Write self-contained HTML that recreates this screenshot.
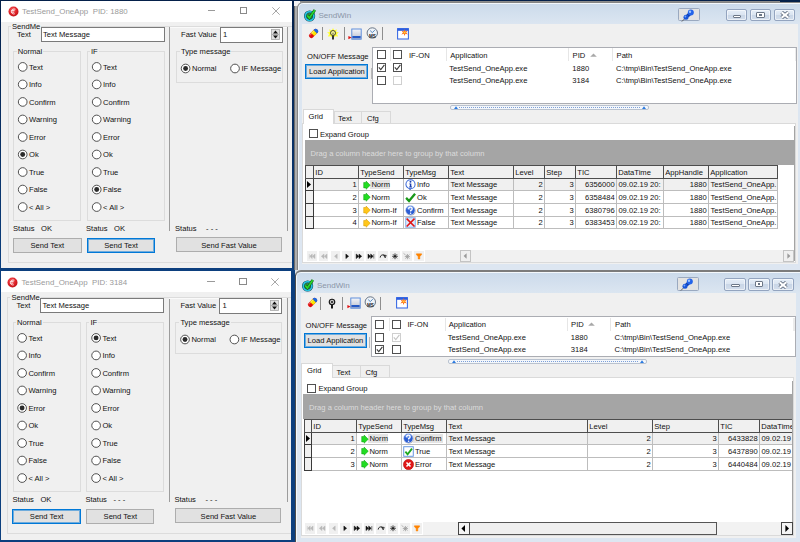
<!DOCTYPE html><html><head><meta charset='utf-8'><title>SendWin test</title><style>
*{box-sizing:border-box;margin:0;padding:0}
html,body{width:800px;height:542px;overflow:hidden;background:linear-gradient(#04204a,#0c3f7e 270px,#0c3f7e);}
body{position:relative;font-family:"Liberation Sans",sans-serif;font-size:7.6px;color:#111;line-height:1}
.a{position:absolute}
.t{position:absolute;white-space:pre;line-height:10px;height:10px}
.win{position:absolute;background:#f0f0f0;overflow:hidden}
.tb{position:absolute;left:0;top:0;right:0;height:21px;background:#fff}
.ttl{position:absolute;white-space:pre;color:#9a9a9a;font-size:7.9px;line-height:10px}
.gb{position:absolute;border:1px solid #dcdcdc}
.gl{position:absolute;background:#f0f0f0;white-space:pre;line-height:10px;height:10px;padding:0 1px}
.inp{position:absolute;background:#fff;border:1px solid #7a7a7a}
.rd{position:absolute;width:9.4px;height:9.4px;border-radius:50%;border:1px solid #333;background:#fff}
.rd.on::after{content:"";position:absolute;left:1.4px;top:1.4px;width:4.6px;height:4.6px;border-radius:50%;background:#222}
.btn{position:absolute;background:#e1e1e1;border:1px solid #adadad;text-align:center;white-space:pre}
.btn.f{border:1px solid #0078d7;box-shadow:inset 0 0 0 1px rgba(0,120,215,.5)}
.cb{position:absolute;width:9px;height:9px;border:1px solid #505050;background:#fff}
.cb.dis{border-color:#cfcfcf}
.sw{position:absolute;background:linear-gradient(#cbdaeb,#dce6f1 22px,#dde6f1);border:1px solid #5a6370;border-radius:6px 6px 0 0;overflow:hidden;box-shadow:inset 0 0 0 1px #f4f8fc}
.cl{position:absolute;background:#f0f0f0;overflow:hidden}
.hd{position:absolute;background:#f0f0f0;border:1px solid #6a6a6a;border-left-width:1px;white-space:pre;overflow:hidden}
.c{position:absolute;background:#fff;border-right:1px solid #c0c0c0;border-bottom:1px solid #c0c0c0;white-space:pre;overflow:hidden}
.c.s{background:#efefef}
.r{text-align:right}
.cap{position:absolute;border:1px solid #93a4bf;border-radius:2px;background:linear-gradient(#e6eef8,#dbe5f1 45%,#c9d6e7 50%,#d3deec);box-shadow:inset 0 0 0 1px rgba(255,255,255,.55)}
.nb{position:absolute;width:9.8px;height:10.6px;background:#f0f0f0}
</style></head><body>
<div class='win' style='left:1px;top:1px;width:291px;height:267px'>
<div class='tb'></div>
<svg class='a' style='left:6.5px;top:4.5px' width='11' height='11' viewBox='0 0 11 11'><defs><radialGradient id='rg1880' cx='.42' cy='.36' r='.7'><stop offset='0' stop-color='#f46a6a'/><stop offset='.55' stop-color='#e02228'/><stop offset='1' stop-color='#b80f14'/></radialGradient></defs><circle cx='5.5' cy='5.5' r='5' fill='url(#rg1880)'/><path d='M7.4 3.2C5.4 2.6 3.6 3.4 3.4 5.4C3.2 7.2 4.8 8.4 6.8 7.8M3.6 4.6H6.6M3.4 6.2H6.2' fill='none' stroke='#fff' stroke-width='.9' opacity='.92'/></svg>
<div class='ttl' style='left:21px;top:5.5px'>TestSend_OneApp  PID: 1880</div>
<div class='a' style='left:207px;top:9.2px;width:7.4px;height:0.8px;background:#9a9a9a'></div>
<div class='a' style='left:239px;top:6px;width:7.4px;height:7.4px;border:0.8px solid #8a8a8a'></div>
<svg class='a' style='left:270.6px;top:5.6px' width='8' height='8' viewBox='0 0 8 8'><path d='M0.3 0.3L7.7 7.7M7.7 0.3L0.3 7.7' stroke='#8f8f8f' stroke-width='.8'/></svg>
<div class='gb' style='left:6.6px;top:25px;width:286px;height:236.8px'></div>
<div class='gl' style='left:10.00px;top:21.00px;'>SendMe</div>
<div class='t' style='left:16.00px;top:29.00px;'>Text</div>
<div class='inp' style='left:40px;top:26px;width:124px;height:15px'></div>
<div class='t' style='left:42.00px;top:29.00px;'>Text Message</div>
<div class='gb' style='left:12.2px;top:49.5px;width:68.3px;height:170.6px'></div>
<div class='gl' style='left:15.70px;top:46.00px;'>Normal</div>
<div class='gb' style='left:85.5px;top:49.5px;width:78px;height:170.6px'></div>
<div class='gl' style='left:89.00px;top:46.00px;'>IF</div>
<svg class='a' style='left:15px;top:59px' width='12' height='12' viewBox='0 0 12 12'><circle cx='6.70' cy='6.90' r='4.35' fill='#fff' stroke='#3e3e3e' stroke-width='.9'/></svg>
<div class='t' style='left:28.00px;top:62.00px;'>Text</div>
<svg class='a' style='left:89px;top:59px' width='12' height='12' viewBox='0 0 12 12'><circle cx='6.70' cy='6.90' r='4.35' fill='#fff' stroke='#3e3e3e' stroke-width='.9'/></svg>
<div class='t' style='left:102.00px;top:62.00px;'>Text</div>
<svg class='a' style='left:15px;top:77px' width='12' height='12' viewBox='0 0 12 12'><circle cx='6.70' cy='6.42' r='4.35' fill='#fff' stroke='#3e3e3e' stroke-width='.9'/></svg>
<div class='t' style='left:28.00px;top:79.00px;'>Info</div>
<svg class='a' style='left:89px;top:77px' width='12' height='12' viewBox='0 0 12 12'><circle cx='6.70' cy='6.42' r='4.35' fill='#fff' stroke='#3e3e3e' stroke-width='.9'/></svg>
<div class='t' style='left:102.00px;top:79.00px;'>Info</div>
<svg class='a' style='left:15px;top:94px' width='12' height='12' viewBox='0 0 12 12'><circle cx='6.70' cy='6.94' r='4.35' fill='#fff' stroke='#3e3e3e' stroke-width='.9'/></svg>
<div class='t' style='left:28.00px;top:97.00px;'>Confirm</div>
<svg class='a' style='left:89px;top:94px' width='12' height='12' viewBox='0 0 12 12'><circle cx='6.70' cy='6.94' r='4.35' fill='#fff' stroke='#3e3e3e' stroke-width='.9'/></svg>
<div class='t' style='left:102.00px;top:97.00px;'>Confirm</div>
<svg class='a' style='left:15px;top:112px' width='12' height='12' viewBox='0 0 12 12'><circle cx='6.70' cy='6.46' r='4.35' fill='#fff' stroke='#3e3e3e' stroke-width='.9'/></svg>
<div class='t' style='left:28.00px;top:114.00px;'>Warning</div>
<svg class='a' style='left:89px;top:112px' width='12' height='12' viewBox='0 0 12 12'><circle cx='6.70' cy='6.46' r='4.35' fill='#fff' stroke='#3e3e3e' stroke-width='.9'/></svg>
<div class='t' style='left:102.00px;top:114.00px;'>Warning</div>
<svg class='a' style='left:15px;top:129px' width='12' height='12' viewBox='0 0 12 12'><circle cx='6.70' cy='6.98' r='4.35' fill='#fff' stroke='#3e3e3e' stroke-width='.9'/></svg>
<div class='t' style='left:28.00px;top:132.00px;'>Error</div>
<svg class='a' style='left:89px;top:129px' width='12' height='12' viewBox='0 0 12 12'><circle cx='6.70' cy='6.98' r='4.35' fill='#fff' stroke='#3e3e3e' stroke-width='.9'/></svg>
<div class='t' style='left:102.00px;top:132.00px;'>Error</div>
<svg class='a' style='left:15px;top:147px' width='12' height='12' viewBox='0 0 12 12'><circle cx='6.70' cy='6.50' r='4.35' fill='#fff' stroke='#3e3e3e' stroke-width='.9'/><circle cx='6.70' cy='6.50' r='2.45' fill='#2b2b2b'/></svg>
<div class='t' style='left:28.00px;top:149.00px;'>Ok</div>
<svg class='a' style='left:89px;top:147px' width='12' height='12' viewBox='0 0 12 12'><circle cx='6.70' cy='6.50' r='4.35' fill='#fff' stroke='#3e3e3e' stroke-width='.9'/></svg>
<div class='t' style='left:102.00px;top:149.00px;'>Ok</div>
<svg class='a' style='left:15px;top:165px' width='12' height='12' viewBox='0 0 12 12'><circle cx='6.70' cy='6.02' r='4.35' fill='#fff' stroke='#3e3e3e' stroke-width='.9'/></svg>
<div class='t' style='left:28.00px;top:167.00px;'>True</div>
<svg class='a' style='left:89px;top:165px' width='12' height='12' viewBox='0 0 12 12'><circle cx='6.70' cy='6.02' r='4.35' fill='#fff' stroke='#3e3e3e' stroke-width='.9'/></svg>
<div class='t' style='left:102.00px;top:167.00px;'>True</div>
<svg class='a' style='left:15px;top:182px' width='12' height='12' viewBox='0 0 12 12'><circle cx='6.70' cy='6.54' r='4.35' fill='#fff' stroke='#3e3e3e' stroke-width='.9'/></svg>
<div class='t' style='left:28.00px;top:184.00px;'>False</div>
<svg class='a' style='left:89px;top:182px' width='12' height='12' viewBox='0 0 12 12'><circle cx='6.70' cy='6.54' r='4.35' fill='#fff' stroke='#3e3e3e' stroke-width='.9'/><circle cx='6.70' cy='6.54' r='2.45' fill='#2b2b2b'/></svg>
<div class='t' style='left:102.00px;top:184.00px;'>False</div>
<svg class='a' style='left:15px;top:200px' width='12' height='12' viewBox='0 0 12 12'><circle cx='6.70' cy='6.06' r='4.35' fill='#fff' stroke='#3e3e3e' stroke-width='.9'/></svg>
<div class='t' style='left:28.00px;top:202.00px;'>&lt; All &gt;</div>
<svg class='a' style='left:89px;top:200px' width='12' height='12' viewBox='0 0 12 12'><circle cx='6.70' cy='6.06' r='4.35' fill='#fff' stroke='#3e3e3e' stroke-width='.9'/></svg>
<div class='t' style='left:102.00px;top:202.00px;'>&lt; All &gt;</div>
<div class='t' style='left:12.00px;top:223.00px;'>Status</div>
<div class='t' style='left:40.00px;top:223.00px;'>OK</div>
<div class='t' style='left:85.00px;top:223.00px;'>Status</div>
<div class='t' style='left:113.00px;top:223.00px;'>OK</div>
<div class='t' style='left:174.00px;top:223.00px;'>Status</div>
<div class='t' style='left:205.00px;top:223.00px;'>- - -</div>
<div class='btn' style='left:12px;top:237px;width:68.5px;height:15px'></div>
<div class='t' style='left:12.00px;top:240.00px;width:68.5px;text-align:center'>Send Text</div>
<div class='btn f' style='left:86px;top:237px;width:68px;height:15px'></div>
<div class='t' style='left:86.00px;top:240.00px;width:68px;text-align:center'>Send Text</div>
<div class='btn' style='left:175px;top:236.4px;width:106px;height:15px'></div>
<div class='t' style='left:175.00px;top:240.00px;width:106px;text-align:center'>Send Fast Value</div>
<div class='a' style='left:168.3px;top:26px;width:0.9px;height:204px;background:#9c9c9c'></div>
<div class='a' style='left:286.3px;top:26px;width:0.9px;height:204px;background:#9c9c9c'></div>
<div class='a' style='left:169px;top:25.6px;width:117px;height:0.8px;background:#fafafa'></div>
<div class='t' style='left:180.00px;top:29.00px;'>Fast Value</div>
<div class='inp' style='left:219px;top:26px;width:63px;height:16px'></div>
<div class='t' style='left:222.00px;top:29.00px;'>1</div>
<svg class='a' style='left:270px;top:28px' width='9' height='11' viewBox='0 0 9 11'><rect x='.5' y='.5' width='8' height='4.8' fill='#e1e1e1' stroke='#a8a8a8' stroke-width='.8'/><rect x='.5' y='5.7' width='8' height='4.8' fill='#e1e1e1' stroke='#a8a8a8' stroke-width='.8'/><path d='M2 4.4L4.5 1.6L7 4.4Z M2 6.6L4.5 9.4L7 6.6Z' fill='#111'/></svg>
<div class='gb' style='left:174.5px;top:50px;width:107px;height:31.5px'></div>
<div class='gl' style='left:179.00px;top:46.00px;'>Type message</div>
<svg class='a' style='left:178px;top:61px' width='12' height='12' viewBox='0 0 12 12'><circle cx='6.60' cy='6.50' r='4.35' fill='#fff' stroke='#3e3e3e' stroke-width='.9'/><circle cx='6.60' cy='6.50' r='2.45' fill='#2b2b2b'/></svg>
<div class='t' style='left:191.00px;top:63.00px;'>Normal</div>
<svg class='a' style='left:228px;top:61px' width='12' height='12' viewBox='0 0 12 12'><circle cx='6.00' cy='6.50' r='4.35' fill='#fff' stroke='#3e3e3e' stroke-width='.9'/></svg>
<div class='t' style='left:240.50px;top:63.00px;'>IF Message</div>
</div>
<div class='win' style='left:1px;top:271px;width:290px;height:269px'>
<div class='tb'></div>
<svg class='a' style='left:5.9px;top:5.5px' width='11' height='11' viewBox='0 0 11 11'><defs><radialGradient id='rg3184' cx='.42' cy='.36' r='.7'><stop offset='0' stop-color='#f46a6a'/><stop offset='.55' stop-color='#e02228'/><stop offset='1' stop-color='#b80f14'/></radialGradient></defs><circle cx='5.5' cy='5.5' r='5' fill='url(#rg3184)'/><path d='M7.4 3.2C5.4 2.6 3.6 3.4 3.4 5.4C3.2 7.2 4.8 8.4 6.8 7.8M3.6 4.6H6.6M3.4 6.2H6.2' fill='none' stroke='#fff' stroke-width='.9' opacity='.92'/></svg>
<div class='ttl' style='left:20.4px;top:6.5px'>TestSend_OneApp  PID: 3184</div>
<div class='a' style='left:206.4px;top:10.2px;width:7.4px;height:0.8px;background:#9a9a9a'></div>
<div class='a' style='left:238.4px;top:7px;width:7.4px;height:7.4px;border:0.8px solid #8a8a8a'></div>
<svg class='a' style='left:270.0px;top:6.6px' width='8' height='8' viewBox='0 0 8 8'><path d='M0.3 0.3L7.7 7.7M7.7 0.3L0.3 7.7' stroke='#8f8f8f' stroke-width='.8'/></svg>
<div class='gb' style='left:6.0px;top:26px;width:286px;height:236.8px'></div>
<div class='gl' style='left:9.40px;top:22.00px;'>SendMe</div>
<div class='t' style='left:15.40px;top:30.00px;'>Text</div>
<div class='inp' style='left:39.4px;top:27px;width:124px;height:15px'></div>
<div class='t' style='left:41.40px;top:30.00px;'>Text Message</div>
<div class='gb' style='left:11.6px;top:50.5px;width:68.3px;height:170.6px'></div>
<div class='gl' style='left:15.10px;top:47.00px;'>Normal</div>
<div class='gb' style='left:84.9px;top:50.5px;width:78px;height:170.6px'></div>
<div class='gl' style='left:88.40px;top:47.00px;'>IF</div>
<svg class='a' style='left:15px;top:60px' width='12' height='12' viewBox='0 0 12 12'><circle cx='6.10' cy='6.90' r='4.35' fill='#fff' stroke='#3e3e3e' stroke-width='.9'/></svg>
<div class='t' style='left:27.40px;top:63.00px;'>Text</div>
<svg class='a' style='left:89px;top:60px' width='12' height='12' viewBox='0 0 12 12'><circle cx='6.10' cy='6.90' r='4.35' fill='#fff' stroke='#3e3e3e' stroke-width='.9'/><circle cx='6.10' cy='6.90' r='2.45' fill='#2b2b2b'/></svg>
<div class='t' style='left:101.40px;top:63.00px;'>Text</div>
<svg class='a' style='left:15px;top:78px' width='12' height='12' viewBox='0 0 12 12'><circle cx='6.10' cy='6.42' r='4.35' fill='#fff' stroke='#3e3e3e' stroke-width='.9'/></svg>
<div class='t' style='left:27.40px;top:80.00px;'>Info</div>
<svg class='a' style='left:89px;top:78px' width='12' height='12' viewBox='0 0 12 12'><circle cx='6.10' cy='6.42' r='4.35' fill='#fff' stroke='#3e3e3e' stroke-width='.9'/></svg>
<div class='t' style='left:101.40px;top:80.00px;'>Info</div>
<svg class='a' style='left:15px;top:95px' width='12' height='12' viewBox='0 0 12 12'><circle cx='6.10' cy='6.94' r='4.35' fill='#fff' stroke='#3e3e3e' stroke-width='.9'/></svg>
<div class='t' style='left:27.40px;top:98.00px;'>Confirm</div>
<svg class='a' style='left:89px;top:95px' width='12' height='12' viewBox='0 0 12 12'><circle cx='6.10' cy='6.94' r='4.35' fill='#fff' stroke='#3e3e3e' stroke-width='.9'/></svg>
<div class='t' style='left:101.40px;top:98.00px;'>Confirm</div>
<svg class='a' style='left:15px;top:113px' width='12' height='12' viewBox='0 0 12 12'><circle cx='6.10' cy='6.46' r='4.35' fill='#fff' stroke='#3e3e3e' stroke-width='.9'/></svg>
<div class='t' style='left:27.40px;top:115.00px;'>Warning</div>
<svg class='a' style='left:89px;top:113px' width='12' height='12' viewBox='0 0 12 12'><circle cx='6.10' cy='6.46' r='4.35' fill='#fff' stroke='#3e3e3e' stroke-width='.9'/></svg>
<div class='t' style='left:101.40px;top:115.00px;'>Warning</div>
<svg class='a' style='left:15px;top:130px' width='12' height='12' viewBox='0 0 12 12'><circle cx='6.10' cy='6.98' r='4.35' fill='#fff' stroke='#3e3e3e' stroke-width='.9'/><circle cx='6.10' cy='6.98' r='2.45' fill='#2b2b2b'/></svg>
<div class='t' style='left:27.40px;top:133.00px;'>Error</div>
<svg class='a' style='left:89px;top:130px' width='12' height='12' viewBox='0 0 12 12'><circle cx='6.10' cy='6.98' r='4.35' fill='#fff' stroke='#3e3e3e' stroke-width='.9'/></svg>
<div class='t' style='left:101.40px;top:133.00px;'>Error</div>
<svg class='a' style='left:15px;top:148px' width='12' height='12' viewBox='0 0 12 12'><circle cx='6.10' cy='6.50' r='4.35' fill='#fff' stroke='#3e3e3e' stroke-width='.9'/></svg>
<div class='t' style='left:27.40px;top:150.00px;'>Ok</div>
<svg class='a' style='left:89px;top:148px' width='12' height='12' viewBox='0 0 12 12'><circle cx='6.10' cy='6.50' r='4.35' fill='#fff' stroke='#3e3e3e' stroke-width='.9'/></svg>
<div class='t' style='left:101.40px;top:150.00px;'>Ok</div>
<svg class='a' style='left:15px;top:166px' width='12' height='12' viewBox='0 0 12 12'><circle cx='6.10' cy='6.02' r='4.35' fill='#fff' stroke='#3e3e3e' stroke-width='.9'/></svg>
<div class='t' style='left:27.40px;top:168.00px;'>True</div>
<svg class='a' style='left:89px;top:166px' width='12' height='12' viewBox='0 0 12 12'><circle cx='6.10' cy='6.02' r='4.35' fill='#fff' stroke='#3e3e3e' stroke-width='.9'/></svg>
<div class='t' style='left:101.40px;top:168.00px;'>True</div>
<svg class='a' style='left:15px;top:183px' width='12' height='12' viewBox='0 0 12 12'><circle cx='6.10' cy='6.54' r='4.35' fill='#fff' stroke='#3e3e3e' stroke-width='.9'/></svg>
<div class='t' style='left:27.40px;top:185.00px;'>False</div>
<svg class='a' style='left:89px;top:183px' width='12' height='12' viewBox='0 0 12 12'><circle cx='6.10' cy='6.54' r='4.35' fill='#fff' stroke='#3e3e3e' stroke-width='.9'/></svg>
<div class='t' style='left:101.40px;top:185.00px;'>False</div>
<svg class='a' style='left:15px;top:201px' width='12' height='12' viewBox='0 0 12 12'><circle cx='6.10' cy='6.06' r='4.35' fill='#fff' stroke='#3e3e3e' stroke-width='.9'/></svg>
<div class='t' style='left:27.40px;top:203.00px;'>&lt; All &gt;</div>
<svg class='a' style='left:89px;top:201px' width='12' height='12' viewBox='0 0 12 12'><circle cx='6.10' cy='6.06' r='4.35' fill='#fff' stroke='#3e3e3e' stroke-width='.9'/></svg>
<div class='t' style='left:101.40px;top:203.00px;'>&lt; All &gt;</div>
<div class='t' style='left:11.40px;top:224.00px;'>Status</div>
<div class='t' style='left:39.40px;top:224.00px;'>OK</div>
<div class='t' style='left:84.40px;top:224.00px;'>Status</div>
<div class='t' style='left:112.40px;top:224.00px;'>- - -</div>
<div class='t' style='left:173.40px;top:224.00px;'>Status</div>
<div class='t' style='left:204.40px;top:224.00px;'>- - -</div>
<div class='btn f' style='left:11.4px;top:238px;width:68.5px;height:15px'></div>
<div class='t' style='left:11.40px;top:241.00px;width:68.5px;text-align:center'>Send Text</div>
<div class='btn' style='left:85.4px;top:238px;width:68px;height:15px'></div>
<div class='t' style='left:85.40px;top:241.00px;width:68px;text-align:center'>Send Text</div>
<div class='btn' style='left:174.4px;top:237.4px;width:106px;height:15px'></div>
<div class='t' style='left:174.40px;top:241.00px;width:106px;text-align:center'>Send Fast Value</div>
<div class='a' style='left:167.7px;top:27px;width:0.9px;height:204px;background:#9c9c9c'></div>
<div class='a' style='left:285.7px;top:27px;width:0.9px;height:204px;background:#9c9c9c'></div>
<div class='a' style='left:168.4px;top:26.6px;width:117px;height:0.8px;background:#fafafa'></div>
<div class='t' style='left:179.40px;top:30.00px;'>Fast Value</div>
<div class='inp' style='left:218.4px;top:27px;width:63px;height:16px'></div>
<div class='t' style='left:221.40px;top:30.00px;'>1</div>
<svg class='a' style='left:269.4px;top:29px' width='9' height='11' viewBox='0 0 9 11'><rect x='.5' y='.5' width='8' height='4.8' fill='#e1e1e1' stroke='#a8a8a8' stroke-width='.8'/><rect x='.5' y='5.7' width='8' height='4.8' fill='#e1e1e1' stroke='#a8a8a8' stroke-width='.8'/><path d='M2 4.4L4.5 1.6L7 4.4Z M2 6.6L4.5 9.4L7 6.6Z' fill='#111'/></svg>
<div class='gb' style='left:173.9px;top:51px;width:107px;height:31.5px'></div>
<div class='gl' style='left:178.40px;top:47.00px;'>Type message</div>
<svg class='a' style='left:178px;top:62px' width='12' height='12' viewBox='0 0 12 12'><circle cx='6.00' cy='6.50' r='4.35' fill='#fff' stroke='#3e3e3e' stroke-width='.9'/><circle cx='6.00' cy='6.50' r='2.45' fill='#2b2b2b'/></svg>
<div class='t' style='left:190.40px;top:64.00px;'>Normal</div>
<svg class='a' style='left:227px;top:62px' width='12' height='12' viewBox='0 0 12 12'><circle cx='6.40' cy='6.50' r='4.35' fill='#fff' stroke='#3e3e3e' stroke-width='.9'/></svg>
<div class='t' style='left:239.90px;top:64.00px;'>IF Message</div>
</div>
<div class='a' style='left:294.4px;top:1.2px;width:520px;height:269px;background:#adadad;border-left:1px solid #6c6c6c;border-top:1px solid #8c8c8c'></div>
<div class='a' style='left:294.4px;top:1.2px;width:6px;height:5px;background:#f4f4f4'></div>
<div class='a' style='left:780px;top:0;width:20px;height:2px;background:#04204a'></div>
<div class='sw' style='left:296.8px;top:2.2px;width:520px;height:268.4px;border:1px solid #858585;border-bottom:0'>
<svg class='a' style='left:5.8px;top:4.7px' width='13' height='14' viewBox='0 0 13 14'><circle cx='5.6' cy='8' r='4.3' fill='#2c8a4a' stroke='#173a48' stroke-width='2.6'/><circle cx='5.6' cy='8' r='4.3' fill='none' stroke='#25c3e0' stroke-width='1.7'/><path d='M3.2 7.4 L5.4 10 L10.8 2' fill='none' stroke='#0e5a16' stroke-width='2.8'/><path d='M3.2 7.4 L5.4 10 L10.8 2' fill='none' stroke='#2bd42b' stroke-width='1.7'/></svg>
<div class='ttl' style='left:20.7px;top:7.8px;color:#8b96a8;font-size:8.05px'>SendWin</div>
<div class='a' style='left:380.6px;top:4.7px;width:21.8px;height:13.5px;background:#e3e3e3;border:1px solid #9aa9c0;border-radius:1.5px'></div>
<svg class='a' style='left:383.6px;top:5.4px' width='14' height='13' viewBox='0 0 14 13'><path d='M0.8 12.6L4.4 9' stroke='#4a4a4a' stroke-width='.8'/><path d='M5.4 5.6L7.4 3.8L9.8 6.4L7.4 8.2Z' fill='#0f3fb0'/><circle cx='5' cy='8.2' r='2.5' fill='#1854d8'/><circle cx='9.8' cy='3.6' r='3' fill='#2464ea'/><circle cx='9' cy='2.7' r='1.2' fill='#9cc4ff'/><circle cx='4.4' cy='7.5' r='.9' fill='#7aa8f8'/></svg>
<div class='cap' style='left:427.8px;top:6.0px;width:21.8px;height:12.2px'></div>
<div class='cap' style='left:451.8px;top:6.0px;width:21.8px;height:12.2px'></div>
<div class='cap' style='left:475.8px;top:6.0px;width:21.8px;height:12.2px'></div>
<div class='a' style='left:435.2px;top:11.6px;width:8.4px;height:3.4px;background:#fff;border:1px solid #6c7787;border-radius:1px'></div>
<div class='a' style='left:458.6px;top:8.8px;width:8.4px;height:6px;background:#fff;border:1px solid #6c7787;border-radius:1px'></div>
<div class='a' style='left:461.4px;top:10.8px;width:2.8px;height:1.6px;background:#6a7686'></div>
<svg class='a' style='left:481.8px;top:8.2px' width='10' height='8' viewBox='0 0 10 8'><path d='M1.6 1.2L8.4 6.8M8.4 1.2L1.6 6.8' stroke='#687486' stroke-width='3.7'/><path d='M1.6 1.2L8.4 6.8M8.4 1.2L1.6 6.8' stroke='#fff' stroke-width='2.1'/></svg>
<div class='cl' style='left:4.6px;top:20.5px;width:495.2px;height:240.5px'>
<svg class='a' style='left:5.900000000000034px;top:4.5px' width='11' height='11' viewBox='0 0 13 13'><g transform='rotate(-45 6.5 6.5)'><rect x='0.2' y='3.7' width='12.6' height='5.6' rx='2.4' fill='#e00c0c'/><rect x='5' y='3.7' width='4.6' height='5.6' fill='#f8e800'/><path d='M9.4 3.7H10.6A2.3 2.6 0 0 1 10.6 9.3H9.4Z' fill='#1a6ae0'/><rect x='1.6' y='4.3' width='8' height='1.2' fill='#fff' opacity='.35'/></g></svg>
<div class='a' style='left:19.600000000000023px;top:3.8000000000000007px;width:.8px;height:13px;background:#8e8e8e'></div>
<svg class='a' style='left:25.0px;top:3.900000000000002px' width='12' height='13' viewBox='0 0 12 13'><path d='M6 0L7.2 2.6L9.8 1.2L9.2 3.9L12 4.6L9.8 6L11.2 8.4L8.4 8.2L6 10L3.6 8.2L0.8 8.4L2.2 6L0 4.6L2.8 3.9L2.2 1.2L4.8 2.6Z' fill='#ffff30'/><circle cx='6' cy='5' r='2.5' fill='#ffff9a' stroke='#222' stroke-width='.8'/><path d='M5 7.4H7V11.4H5Z' fill='#333'/><path d='M5.4 4.6L6 6.6L6.6 4.6' stroke='#444' stroke-width='.5' fill='none'/></svg>
<div class='a' style='left:41.60000000000002px;top:3.8000000000000007px;width:.8px;height:13px;background:#8e8e8e'></div>
<svg class='a' style='left:46.0px;top:4.300000000000001px' width='14' height='12' viewBox='0 0 14 12'><defs><linearGradient id='dg1' x1='0' y1='0' x2='0' y2='1'><stop offset='0' stop-color='#f4f6fa'/><stop offset='1' stop-color='#b9c0cf'/></linearGradient></defs><rect x='3.8' y='1' width='9.4' height='10.2' fill='url(#dg1)' stroke='#5285d8' stroke-width='.9'/><rect x='4.4' y='8' width='8.2' height='2.2' fill='#2458c4'/><path d='M0.4 8L3.6 9.6L0.4 11.2Z' fill='#e01010'/></svg>
<svg class='a' style='left:63.60000000000002px;top:3.3000000000000007px' width='13' height='13' viewBox='0 0 13 13'><circle cx='6.3' cy='6' r='5.2' fill='#eef3f8' stroke='#6a7686' stroke-width='1'/><path d='M4.2 3.6L6.3 5.6L8.8 3.2' stroke='#2a6ab0' stroke-width='.8' fill='none'/><text x='6.4' y='11.2' font-size='4.6' font-weight='bold' text-anchor='middle' font-family='Liberation Sans, sans-serif' fill='#222'>MS</text></svg>
<div class='a' style='left:79.60000000000002px;top:3.8000000000000007px;width:.8px;height:13px;background:#8e8e8e'></div>
<svg class='a' style='left:95.10000000000002px;top:4.300000000000001px' width='12' height='12' viewBox='0 0 12 12'><rect x='.6' y='.6' width='10.8' height='10.4' fill='#fff' stroke='#3466e4' stroke-width='1.05'/><rect x='.6' y='.6' width='10.8' height='2.2' fill='#2a5ce0'/><path d='M7.6 1L8.4 3.4L10.8 2.6L9.2 4.6L10.8 6.4L8.4 5.8L7.6 8L6.8 5.8L4.4 6.4L6 4.6L4.4 2.6L6.8 3.4Z' fill='#ff6a10'/><circle cx='7.6' cy='4.5' r='1.1' fill='#ffd23a'/></svg>
<div class='t' style='left:4.60px;top:28.30px;'>ON/OFF Message</div>
<div class='btn f' style='left:3.1000000000000227px;top:40.3px;width:63px;height:15px'></div>
<div class='t' style='left:3.10px;top:43.30px;width:63px;text-align:center'>Load Application</div>
<div class='a' style='left:68.60000000000002px;top:44.3px;width:.8px;height:11px;background:#b8b8b8'></div>
<div class='a' style='left:69.80000000000001px;top:23.500000000000004px;width:425px;height:57px;background:#fff;border:1px solid #abadb3'></div>
<div class='a' style='left:87.80000000000001px;top:24.8px;width:.8px;height:13px;background:#e6e6e6'></div>
<div class='a' style='left:144.0px;top:24.8px;width:.8px;height:13px;background:#e6e6e6'></div>
<div class='a' style='left:266.1px;top:24.8px;width:.8px;height:13px;background:#e6e6e6'></div>
<div class='a' style='left:309.6px;top:24.8px;width:.8px;height:13px;background:#e6e6e6'></div>
<div class='a' style='left:492.20000000000005px;top:24.8px;width:1.6px;height:13px;background:#ececec'></div>
<div class='cb' style='left:74.60px;top:26.80px'></div>
<div class='cb' style='left:91.10px;top:26.80px'></div>
<div class='cb' style='left:74.60px;top:39.80px'><svg class='a' style='left:0;top:0' width='7' height='7' viewBox='0 0 7 7'><path d='M0.8 3.3L2.8 5.6L6.4 0.9' fill='none' stroke='#3a3a3a' stroke-width='1.1'/></svg></div>
<div class='cb' style='left:91.10px;top:39.80px'><svg class='a' style='left:0;top:0' width='7' height='7' viewBox='0 0 7 7'><path d='M0.8 3.3L2.8 5.6L6.4 0.9' fill='none' stroke='#3a3a3a' stroke-width='1.1'/></svg></div>
<div class='cb' style='left:74.60px;top:52.30px'></div>
<div class='cb dis' style='left:91.10px;top:52.30px'></div>
<div class='t' style='left:106.60px;top:27.30px;'>IF-ON</div>
<div class='t' style='left:147.90px;top:27.30px;'>Application</div>
<div class='t' style='left:270.20px;top:27.30px;'>PID</div>
<svg class='a' style='left:287.20000000000005px;top:29.3px' width='7' height='4' viewBox='0 0 7 4'><path d='M0.2 3.8L3.5 0.4L6.8 3.8Z' fill='#a8a8a8'/></svg>
<div class='t' style='left:314.20px;top:27.30px;'>Path</div>
<div class='t' style='left:146.90px;top:40.30px;'>TestSend_OneApp.exe</div>
<div class='t' style='left:269.90px;top:40.30px;'>1880</div>
<div class='t' style='left:313.60px;top:40.30px;'>C:\tmp\Bin\TestSend_OneApp.exe</div>
<div class='t' style='left:146.90px;top:52.30px;'>TestSend_OneApp.exe</div>
<div class='t' style='left:269.90px;top:52.30px;'>3184</div>
<div class='t' style='left:313.60px;top:52.30px;'>C:\tmp\Bin\TestSend_OneApp.exe</div>
<div class='a' style='left:147.60000000000002px;top:80.89999999999999px;width:198.6px;height:5px;background:#f4f7fb;border:1px solid #b9c2cf;border-radius:2px'></div>
<div class='a' style='left:156.60000000000002px;top:83.0px;width:181px;height:0;border-top:1px dotted #7da0d8'></div>
<svg class='a' style='left:151.60000000000002px;top:81.89999999999999px' width='4' height='3' viewBox='0 0 4 3'><path d='M0 3L2 0.2L4 3Z' fill='#2a7ae0'/></svg>
<svg class='a' style='left:339.6px;top:81.89999999999999px' width='4' height='3' viewBox='0 0 4 3'><path d='M0 3L2 0.2L4 3Z' fill='#2a7ae0'/></svg>
<div class='a' style='left:31.600000000000023px;top:87.5px;width:28.3px;height:12.6px;background:#f0f0f0;border:1px solid #d9d9d9;border-bottom:0'></div>
<div class='a' style='left:59.10000000000002px;top:87.5px;width:29.6px;height:12.6px;background:#f0f0f0;border:1px solid #d9d9d9;border-bottom:0'></div>
<div class='a' style='left:0.0px;top:99.3px;width:493.3px;height:139.79999999999998px;background:#fff;border:1px solid #dadada'></div>
<div class='a' style='left:0.4000000000000341px;top:85.3px;width:31.6px;height:15px;background:#fff;border:1px solid #d9d9d9;border-bottom:0'></div>
<div class='t' style='left:6.20px;top:88.30px;'>Grid</div>
<div class='t' style='left:35.60px;top:90.30px;'>Text</div>
<div class='t' style='left:64.60px;top:90.30px;'>Cfg</div>
<div class='cb' style='left:6.20px;top:105.70px'></div>
<div class='t' style='left:17.60px;top:106.30px;'>Expand Group</div>
<div class='a' style='left:2.6000000000000227px;top:116.49999999999999px;width:488.7px;height:25px;background:#a5a5a5'></div>
<div class='t' style='left:8.20px;top:125.30px;color:#dcdcdc'>Drag a column header here to group by that column</div>
<div class='a' style='left:2.60px;top:141.30px;width:473px;height:14px;background:#4d4d4d;'></div>
<div class='a' style='left:10.60px;top:155.30px;width:465px;height:50px;background:#bdbdbd;'></div>
<div class='a' style='left:2.60px;top:155.30px;width:9px;height:50px;background:#3a3a3a;'></div>
<div class='a' style='left:3.60px;top:142.30px;width:7px;height:12px;background:#f0f0f0;white-space:pre;overflow:hidden;line-height:13.6px;padding-left:1.3px;'></div>
<div class='a' style='left:11.60px;top:142.30px;width:44px;height:12px;background:#f0f0f0;white-space:pre;overflow:hidden;line-height:13.6px;padding-left:1.3px;'>ID</div>
<div class='a' style='left:56.60px;top:142.30px;width:44px;height:12px;background:#f0f0f0;white-space:pre;overflow:hidden;line-height:13.6px;padding-left:1.3px;'>TypeSend</div>
<div class='a' style='left:101.60px;top:142.30px;width:44px;height:12px;background:#f0f0f0;white-space:pre;overflow:hidden;line-height:13.6px;padding-left:1.3px;'>TypeMsg</div>
<div class='a' style='left:146.60px;top:142.30px;width:64px;height:12px;background:#f0f0f0;white-space:pre;overflow:hidden;line-height:13.6px;padding-left:1.3px;'>Text</div>
<div class='a' style='left:211.60px;top:142.30px;width:30px;height:12px;background:#f0f0f0;white-space:pre;overflow:hidden;line-height:13.6px;padding-left:1.3px;'>Level</div>
<div class='a' style='left:242.60px;top:142.30px;width:30px;height:12px;background:#f0f0f0;white-space:pre;overflow:hidden;line-height:13.6px;padding-left:1.3px;'>Step</div>
<div class='a' style='left:273.60px;top:142.30px;width:40px;height:12px;background:#f0f0f0;white-space:pre;overflow:hidden;line-height:13.6px;padding-left:1.3px;'>TIC</div>
<div class='a' style='left:314.60px;top:142.30px;width:46px;height:12px;background:#f0f0f0;white-space:pre;overflow:hidden;line-height:13.6px;padding-left:1.3px;'>DataTime</div>
<div class='a' style='left:361.60px;top:142.30px;width:44px;height:12px;background:#f0f0f0;white-space:pre;overflow:hidden;line-height:13.6px;padding-left:1.3px;'>AppHandle</div>
<div class='a' style='left:406.60px;top:142.30px;width:68px;height:12px;background:#f0f0f0;white-space:pre;overflow:hidden;line-height:13.6px;padding-left:1.3px;'>Application</div>
<div class='a' style='left:3.60px;top:155.30px;width:7px;height:11px;background:#f0f0f0;'></div>
<svg class='a' style='left:4.60px;top:157.30px' width='4' height='7' viewBox='0 0 4 7'><path d='M0 0L4 3.5L0 7Z' fill='#000'/></svg>
<div class='a' style='left:11.60px;top:155.30px;width:44px;height:11px;background:#f0f0f0;white-space:pre;overflow:hidden;line-height:12.8px;text-align:right;padding-right:1.3px;'>1</div>
<div class='a' style='left:56.60px;top:155.30px;width:44px;height:11px;background:#fff;white-space:pre;overflow:hidden;line-height:12.8px;padding-left:12.4px;'>Norm</div>
<div class='a' style='left:67.60px;top:156.30px;width:20px;height:9px;background:#e4e4e4;'></div>
<div class='t' style='left:69.00px;top:156.30px;'>Norm</div>
<svg class='a' style='left:60.90px;top:155.90px' width='7.8' height='10.4' viewBox='0 0 9 11'><path d='M0.8 2.4H3.6V0.8L8.4 5.5L3.6 10.2V8.6H0.8Z' fill='#22dd22' stroke='#14a014' stroke-width='.6'/></svg>
<div class='a' style='left:101.60px;top:155.30px;width:44px;height:11px;background:#fff;white-space:pre;overflow:hidden;line-height:12.8px;padding-left:13px;'>Info</div>
<svg class='a' style='left:102.80px;top:155.50px' width='11' height='11' viewBox='0 0 12 12'><path d='M4.6 10.4L5.4 12L6.8 10.6Z' fill='#fff' stroke='#3a68d6' stroke-width='.8'/><circle cx='6' cy='5.7' r='5' fill='#fff' stroke='#3a68d6' stroke-width='1.1'/><circle cx='6' cy='3' r='1.05' fill='#1a3fb0'/><path d='M4.6 4.8H6.9V8.3H7.7V9.2H4.5V8.3H5.3V5.7H4.6Z' fill='#1a3fb0'/></svg>
<div class='a' style='left:146.60px;top:155.30px;width:64px;height:11px;background:#f0f0f0;white-space:pre;overflow:hidden;line-height:12.8px;padding-left:1.4px;'>Text Message</div>
<div class='a' style='left:211.60px;top:155.30px;width:30px;height:11px;background:#f0f0f0;white-space:pre;overflow:hidden;line-height:12.8px;text-align:right;padding-right:1.3px;'>2</div>
<div class='a' style='left:242.60px;top:155.30px;width:30px;height:11px;background:#f0f0f0;white-space:pre;overflow:hidden;line-height:12.8px;text-align:right;padding-right:1.3px;'>3</div>
<div class='a' style='left:273.60px;top:155.30px;width:40px;height:11px;background:#f0f0f0;white-space:pre;overflow:hidden;line-height:12.8px;text-align:right;padding-right:1.3px;'>6356000</div>
<div class='a' style='left:314.60px;top:155.30px;width:46px;height:11px;background:#f0f0f0;white-space:pre;overflow:hidden;line-height:12.8px;padding-left:1.4px;'>09.02.19 20:</div>
<div class='a' style='left:361.60px;top:155.30px;width:44px;height:11px;background:#f0f0f0;white-space:pre;overflow:hidden;line-height:12.8px;text-align:right;padding-right:1.3px;'>1880</div>
<div class='a' style='left:406.60px;top:155.30px;width:68px;height:11px;background:#f0f0f0;white-space:pre;overflow:hidden;line-height:12.8px;padding-left:1.6px;'>TestSend_OneApp.</div>
<div class='a' style='left:3.60px;top:167.30px;width:7px;height:12px;background:#f0f0f0;'></div>
<div class='a' style='left:11.60px;top:167.30px;width:44px;height:12px;background:#fff;white-space:pre;overflow:hidden;line-height:13.8px;text-align:right;padding-right:1.3px;'>2</div>
<div class='a' style='left:56.60px;top:167.30px;width:44px;height:12px;background:#fff;white-space:pre;overflow:hidden;line-height:13.8px;padding-left:12.4px;'>Norm</div>
<svg class='a' style='left:60.90px;top:168.40px' width='7.8' height='10.4' viewBox='0 0 9 11'><path d='M0.8 2.4H3.6V0.8L8.4 5.5L3.6 10.2V8.6H0.8Z' fill='#22dd22' stroke='#14a014' stroke-width='.6'/></svg>
<div class='a' style='left:101.60px;top:167.30px;width:44px;height:12px;background:#fff;white-space:pre;overflow:hidden;line-height:13.8px;padding-left:13px;'>Ok</div>
<svg class='a' style='left:102.80px;top:168.00px' width='11' height='11' viewBox='0 0 12 12'><path d='M1.2 6.4L4.4 9.8L11 1.8' fill='none' stroke='#1a981a' stroke-width='2.5'/></svg>
<div class='a' style='left:146.60px;top:167.30px;width:64px;height:12px;background:#fff;white-space:pre;overflow:hidden;line-height:13.8px;padding-left:1.4px;'>Text Message</div>
<div class='a' style='left:211.60px;top:167.30px;width:30px;height:12px;background:#fff;white-space:pre;overflow:hidden;line-height:13.8px;text-align:right;padding-right:1.3px;'>2</div>
<div class='a' style='left:242.60px;top:167.30px;width:30px;height:12px;background:#fff;white-space:pre;overflow:hidden;line-height:13.8px;text-align:right;padding-right:1.3px;'>3</div>
<div class='a' style='left:273.60px;top:167.30px;width:40px;height:12px;background:#fff;white-space:pre;overflow:hidden;line-height:13.8px;text-align:right;padding-right:1.3px;'>6358484</div>
<div class='a' style='left:314.60px;top:167.30px;width:46px;height:12px;background:#fff;white-space:pre;overflow:hidden;line-height:13.8px;padding-left:1.4px;'>09.02.19 20:</div>
<div class='a' style='left:361.60px;top:167.30px;width:44px;height:12px;background:#fff;white-space:pre;overflow:hidden;line-height:13.8px;text-align:right;padding-right:1.3px;'>1880</div>
<div class='a' style='left:406.60px;top:167.30px;width:68px;height:12px;background:#fff;white-space:pre;overflow:hidden;line-height:13.8px;padding-left:1.6px;'>TestSend_OneApp.</div>
<div class='a' style='left:3.60px;top:180.30px;width:7px;height:12px;background:#f0f0f0;'></div>
<div class='a' style='left:11.60px;top:180.30px;width:44px;height:12px;background:#fff;white-space:pre;overflow:hidden;line-height:13.8px;text-align:right;padding-right:1.3px;'>3</div>
<div class='a' style='left:56.60px;top:180.30px;width:44px;height:12px;background:#fff;white-space:pre;overflow:hidden;line-height:13.8px;padding-left:12.4px;'>Norm-If</div>
<svg class='a' style='left:60.90px;top:181.40px' width='7.8' height='10.4' viewBox='0 0 9 11'><path d='M0.8 2.4H3.6V0.8L8.4 5.5L3.6 10.2V8.6H0.8Z' fill='#ffc61a' stroke='#d49a00' stroke-width='.6'/></svg>
<div class='a' style='left:101.60px;top:180.30px;width:44px;height:12px;background:#fff;white-space:pre;overflow:hidden;line-height:13.8px;padding-left:13px;'>Confirm</div>
<svg class='a' style='left:102.80px;top:181.00px' width='11' height='11' viewBox='0 0 12 12'><circle cx='6.5' cy='6.5' r='5.2' fill='#b4b4b4'/><circle cx='5.8' cy='5.8' r='5.2' fill='#2c5ed4' stroke='#dfe6f6' stroke-width='.7'/><ellipse cx='5.6' cy='3.4' rx='3.6' ry='2.2' fill='#7fa4f0' opacity='.75'/><path d='M4 4.5A1.9 1.9 0 1 1 6.2 6.1V7.1' fill='none' stroke='#fff' stroke-width='1.4'/><circle cx='6.1' cy='9' r='.85' fill='#fff'/></svg>
<div class='a' style='left:146.60px;top:180.30px;width:64px;height:12px;background:#fff;white-space:pre;overflow:hidden;line-height:13.8px;padding-left:1.4px;'>Text Message</div>
<div class='a' style='left:211.60px;top:180.30px;width:30px;height:12px;background:#fff;white-space:pre;overflow:hidden;line-height:13.8px;text-align:right;padding-right:1.3px;'>2</div>
<div class='a' style='left:242.60px;top:180.30px;width:30px;height:12px;background:#fff;white-space:pre;overflow:hidden;line-height:13.8px;text-align:right;padding-right:1.3px;'>3</div>
<div class='a' style='left:273.60px;top:180.30px;width:40px;height:12px;background:#fff;white-space:pre;overflow:hidden;line-height:13.8px;text-align:right;padding-right:1.3px;'>6380796</div>
<div class='a' style='left:314.60px;top:180.30px;width:46px;height:12px;background:#fff;white-space:pre;overflow:hidden;line-height:13.8px;padding-left:1.4px;'>09.02.19 20:</div>
<div class='a' style='left:361.60px;top:180.30px;width:44px;height:12px;background:#fff;white-space:pre;overflow:hidden;line-height:13.8px;text-align:right;padding-right:1.3px;'>1880</div>
<div class='a' style='left:406.60px;top:180.30px;width:68px;height:12px;background:#fff;white-space:pre;overflow:hidden;line-height:13.8px;padding-left:1.6px;'>TestSend_OneApp.</div>
<div class='a' style='left:3.60px;top:193.30px;width:7px;height:11px;background:#f0f0f0;'></div>
<div class='a' style='left:11.60px;top:193.30px;width:44px;height:11px;background:#fff;white-space:pre;overflow:hidden;line-height:12.8px;text-align:right;padding-right:1.3px;'>4</div>
<div class='a' style='left:56.60px;top:193.30px;width:44px;height:11px;background:#fff;white-space:pre;overflow:hidden;line-height:12.8px;padding-left:12.4px;'>Norm-If</div>
<svg class='a' style='left:60.90px;top:193.90px' width='7.8' height='10.4' viewBox='0 0 9 11'><path d='M0.8 2.4H3.6V0.8L8.4 5.5L3.6 10.2V8.6H0.8Z' fill='#ffc61a' stroke='#d49a00' stroke-width='.6'/></svg>
<div class='a' style='left:101.60px;top:193.30px;width:44px;height:11px;background:#fff;white-space:pre;overflow:hidden;line-height:12.8px;padding-left:13px;'>False</div>
<svg class='a' style='left:102.80px;top:193.50px' width='11' height='11' viewBox='0 0 12 12'><rect x='.8' y='.8' width='10.4' height='10.4' fill='#dde9fb' stroke='#79a4e6' stroke-width='.9'/><path d='M1.8 1.8L10.4 10.4M10.4 1.8L1.8 10.4' stroke='#e01414' stroke-width='1.7'/></svg>
<div class='a' style='left:146.60px;top:193.30px;width:64px;height:11px;background:#fff;white-space:pre;overflow:hidden;line-height:12.8px;padding-left:1.4px;'>Text Message</div>
<div class='a' style='left:211.60px;top:193.30px;width:30px;height:11px;background:#fff;white-space:pre;overflow:hidden;line-height:12.8px;text-align:right;padding-right:1.3px;'>2</div>
<div class='a' style='left:242.60px;top:193.30px;width:30px;height:11px;background:#fff;white-space:pre;overflow:hidden;line-height:12.8px;text-align:right;padding-right:1.3px;'>3</div>
<div class='a' style='left:273.60px;top:193.30px;width:40px;height:11px;background:#fff;white-space:pre;overflow:hidden;line-height:12.8px;text-align:right;padding-right:1.3px;'>6383453</div>
<div class='a' style='left:314.60px;top:193.30px;width:46px;height:11px;background:#fff;white-space:pre;overflow:hidden;line-height:12.8px;padding-left:1.4px;'>09.02.19 20:</div>
<div class='a' style='left:361.60px;top:193.30px;width:44px;height:11px;background:#fff;white-space:pre;overflow:hidden;line-height:12.8px;text-align:right;padding-right:1.3px;'>1880</div>
<div class='a' style='left:406.60px;top:193.30px;width:68px;height:11px;background:#fff;white-space:pre;overflow:hidden;line-height:12.8px;padding-left:1.6px;'>TestSend_OneApp.</div>
<div class='a' style='left:491.30000000000007px;top:102.8px;width:1px;height:135px;background:#a4a4a4'></div>
<div class='nb' style='left:4.40px;top:227.00px'><svg class='a' style='left:0;top:0' width='10' height='10.5' viewBox='0 0 10 10.5'><path d='M2.3 3V7.6M8 3L5.4 5.3L8 7.6ZM5.2 3L2.7 5.3L5.2 7.6Z' stroke='#b9b9b9' stroke-width='.5' fill='#b9b9b9'/></svg></div>
<div class='nb' style='left:16.30px;top:227.00px'><svg class='a' style='left:0;top:0' width='10' height='10.5' viewBox='0 0 10 10.5'><path d='M8 3L5.3 5.3L8 7.6ZM5 3L2.3 5.3L5 7.6Z' stroke='#b9b9b9' stroke-width='.5' fill='#b9b9b9'/></svg></div>
<div class='nb' style='left:28.20px;top:227.00px'><svg class='a' style='left:0;top:0' width='10' height='10.5' viewBox='0 0 10 10.5'><path d='M6.2 3L3.5 5.3L6.2 7.6Z' stroke='#b9b9b9' stroke-width='.5' fill='#b9b9b9'/></svg></div>
<div class='nb' style='left:40.10px;top:227.00px'><svg class='a' style='left:0;top:0' width='10' height='10.5' viewBox='0 0 10 10.5'><path d='M3.9 3L6.6 5.3L3.9 7.6Z' stroke='#111' stroke-width='.5' fill='#111'/></svg></div>
<div class='nb' style='left:52.00px;top:227.00px'><svg class='a' style='left:0;top:0' width='10' height='10.5' viewBox='0 0 10 10.5'><path d='M2.2 3L4.9 5.3L2.2 7.6ZM5 3L7.7 5.3L5 7.6Z' stroke='#111' stroke-width='.5' fill='#111'/></svg></div>
<div class='nb' style='left:63.90px;top:227.00px'><svg class='a' style='left:0;top:0' width='10' height='10.5' viewBox='0 0 10 10.5'><path d='M2 3L4.5 5.3L2 7.6ZM4.7 3L7.2 5.3L4.7 7.6ZM7.8 3V7.6' stroke='#111' stroke-width='.5' fill='#111'/></svg></div>
<div class='nb' style='left:75.80px;top:227.00px'><svg class='a' style='left:0;top:0' width='10' height='10.5' viewBox='0 0 10 10.5'><path d='M2.2 6.6A2.7 2.7 0 0 1 7 4.8M5.6 4.2L8.2 4.4L7.2 6.8Z' stroke='#222' stroke-width='.9' fill='none'/></svg></div>
<div class='nb' style='left:87.70px;top:227.00px'><svg class='a' style='left:0;top:0' width='10' height='10.5' viewBox='0 0 10 10.5'><path d='M5 2.4V8.2M2.2 5.3H7.8M3 3.3L7 7.3M7 3.3L3 7.3' stroke='#111' stroke-width='.8' fill='none'/></svg></div>
<div class='nb' style='left:99.60px;top:227.00px'><svg class='a' style='left:0;top:0' width='10' height='10.5' viewBox='0 0 10 10.5'><path d='M5.4 3V8.2M2.8 5.6H8M3.4 3.6L7.4 7.6M7.4 3.6L3.4 7.6M1.6 2.4L2.8 3.4' stroke='#999' stroke-width='.8' fill='none'/></svg></div>
<div class='nb' style='left:111.50px;top:227.00px'><svg class='a' style='left:0;top:0' width='10' height='10.5' viewBox='0 0 10 10.5'><path d='M2.4 2.8H7.6V3.8L5.8 5.4V8H4.2V5.4L2.4 3.8Z' stroke='#ff8400' stroke-width='.5' fill='#ff8400'/></svg></div>
<div class='a' style='left:122.60000000000002px;top:226.3px;width:368.6px;height:12px;background:#f1f1f1'></div>
<div class='a' style='left:158.0px;top:226.3px;width:11px;height:12px;background:#f0f0f0;border:1px solid #c4c4c4'><svg class='a' style='left:-1px;top:-1px' width='11' height='12' viewBox='0 0 11 12'><path d='M6.6 3.2L3.6 6L6.6 8.8Z' fill='#9a9a9a'/></svg></div>
<div class='a' style='left:480.20000000000005px;top:226.3px;width:11px;height:12px;background:#f0f0f0;border:1px solid #c4c4c4'><svg class='a' style='left:-1px;top:-1px' width='11' height='12' viewBox='0 0 11 12'><path d='M4.4 3.2L7.4 6L4.4 8.8Z' fill='#9a9a9a'/></svg></div>
</div>
</div>
<div class='a' style='left:294.5px;top:269.5px;width:6px;height:5px;background:#dfe3e8'></div>
<div class='sw' style='left:294.6px;top:270px;width:520px;height:290px;border:1px solid #4c4c4c;border-top:2px solid #7c7c7c'>
<svg class='a' style='left:6.5px;top:5.9px' width='13' height='14' viewBox='0 0 13 14'><circle cx='5.6' cy='8' r='4.3' fill='#2c8a4a' stroke='#173a48' stroke-width='2.6'/><circle cx='5.6' cy='8' r='4.3' fill='none' stroke='#25c3e0' stroke-width='1.7'/><path d='M3.2 7.4 L5.4 10 L10.8 2' fill='none' stroke='#0e5a16' stroke-width='2.8'/><path d='M3.2 7.4 L5.4 10 L10.8 2' fill='none' stroke='#2bd42b' stroke-width='1.7'/></svg>
<div class='ttl' style='left:21.4px;top:9.0px;color:#8b96a8;font-size:8.05px'>SendWin</div>
<div class='a' style='left:381.3px;top:5.1px;width:21.8px;height:13.5px;background:#e3e3e3;border:1px solid #9aa9c0;border-radius:1.5px'></div>
<svg class='a' style='left:384.3px;top:5.8px' width='14' height='13' viewBox='0 0 14 13'><path d='M0.8 12.6L4.4 9' stroke='#4a4a4a' stroke-width='.8'/><path d='M5.4 5.6L7.4 3.8L9.8 6.4L7.4 8.2Z' fill='#0f3fb0'/><circle cx='5' cy='8.2' r='2.5' fill='#1854d8'/><circle cx='9.8' cy='3.6' r='3' fill='#2464ea'/><circle cx='9' cy='2.7' r='1.2' fill='#9cc4ff'/><circle cx='4.4' cy='7.5' r='.9' fill='#7aa8f8'/></svg>
<div class='cap' style='left:428.5px;top:6.4px;width:21.8px;height:12.2px'></div>
<div class='cap' style='left:452.5px;top:6.4px;width:21.8px;height:12.2px'></div>
<div class='cap' style='left:476.5px;top:6.4px;width:21.8px;height:12.2px'></div>
<div class='a' style='left:435.9px;top:12.0px;width:8.4px;height:3.4px;background:#fff;border:1px solid #6c7787;border-radius:1px'></div>
<div class='a' style='left:459.3px;top:9.2px;width:8.4px;height:6px;background:#fff;border:1px solid #6c7787;border-radius:1px'></div>
<div class='a' style='left:462.1px;top:11.2px;width:2.8px;height:1.6px;background:#6a7686'></div>
<svg class='a' style='left:482.5px;top:8.6px' width='10' height='8' viewBox='0 0 10 8'><path d='M1.6 1.2L8.4 6.8M8.4 1.2L1.6 6.8' stroke='#687486' stroke-width='3.7'/><path d='M1.6 1.2L8.4 6.8M8.4 1.2L1.6 6.8' stroke='#fff' stroke-width='2.1'/></svg>
<div class='cl' style='left:5.3px;top:20.9px;width:495.2px;height:244.8px'>
<svg class='a' style='left:5.900000000000034px;top:4.5px' width='11' height='11' viewBox='0 0 13 13'><g transform='rotate(-45 6.5 6.5)'><rect x='0.2' y='3.7' width='12.6' height='5.6' rx='2.4' fill='#e00c0c'/><rect x='5' y='3.7' width='4.6' height='5.6' fill='#f8e800'/><path d='M9.4 3.7H10.6A2.3 2.6 0 0 1 10.6 9.3H9.4Z' fill='#1a6ae0'/><rect x='1.6' y='4.3' width='8' height='1.2' fill='#fff' opacity='.35'/></g></svg>
<div class='a' style='left:19.600000000000023px;top:3.8000000000000007px;width:.8px;height:13px;background:#8e8e8e'></div>
<svg class='a' style='left:25.0px;top:3.900000000000002px' width='12' height='13' viewBox='0 0 12 13'><circle cx='6' cy='5' r='2.7' fill='#c8c8c8' stroke='#1a1a1a' stroke-width='1.1'/><circle cx='6' cy='5' r='1.1' fill='#222'/><path d='M5 7.4H7V11.6H5Z' fill='#1a1a1a'/><path d='M2 5H3M9 5H10M6 0.8V1.6' stroke='#999' stroke-width='.6'/></svg>
<div class='a' style='left:41.60000000000002px;top:3.8000000000000007px;width:.8px;height:13px;background:#8e8e8e'></div>
<svg class='a' style='left:46.0px;top:4.300000000000001px' width='14' height='12' viewBox='0 0 14 12'><defs><linearGradient id='dg0' x1='0' y1='0' x2='0' y2='1'><stop offset='0' stop-color='#f4f6fa'/><stop offset='1' stop-color='#b9c0cf'/></linearGradient></defs><rect x='3.8' y='1' width='9.4' height='10.2' fill='url(#dg0)' stroke='#5285d8' stroke-width='.9'/><rect x='4.4' y='8' width='8.2' height='2.2' fill='#2458c4'/><path d='M0.4 8L3.6 9.6L0.4 11.2Z' fill='#e01010'/></svg>
<svg class='a' style='left:63.60000000000002px;top:3.3000000000000007px' width='13' height='13' viewBox='0 0 13 13'><circle cx='6.3' cy='6' r='5.2' fill='#eef3f8' stroke='#6a7686' stroke-width='1'/><path d='M4.2 3.6L6.3 5.6L8.8 3.2' stroke='#2a6ab0' stroke-width='.8' fill='none'/><text x='6.4' y='11.2' font-size='4.6' font-weight='bold' text-anchor='middle' font-family='Liberation Sans, sans-serif' fill='#222'>MS</text></svg>
<div class='a' style='left:79.60000000000002px;top:3.8000000000000007px;width:.8px;height:13px;background:#8e8e8e'></div>
<svg class='a' style='left:95.10000000000002px;top:4.300000000000001px' width='12' height='12' viewBox='0 0 12 12'><rect x='.6' y='.6' width='10.8' height='10.4' fill='#fff' stroke='#3466e4' stroke-width='1.05'/><rect x='.6' y='.6' width='10.8' height='2.2' fill='#2a5ce0'/><path d='M7.6 1L8.4 3.4L10.8 2.6L9.2 4.6L10.8 6.4L8.4 5.8L7.6 8L6.8 5.8L4.4 6.4L6 4.6L4.4 2.6L6.8 3.4Z' fill='#ff6a10'/><circle cx='7.6' cy='4.5' r='1.1' fill='#ffd23a'/></svg>
<div class='t' style='left:4.60px;top:28.10px;'>ON/OFF Message</div>
<div class='btn f' style='left:3.1000000000000227px;top:40.3px;width:63px;height:15px'></div>
<div class='t' style='left:3.10px;top:43.10px;width:63px;text-align:center'>Load Application</div>
<div class='a' style='left:68.60000000000002px;top:44.3px;width:.8px;height:11px;background:#b8b8b8'></div>
<div class='a' style='left:69.80000000000001px;top:23.500000000000004px;width:425px;height:41px;background:#fff;border:1px solid #abadb3'></div>
<div class='a' style='left:87.80000000000001px;top:24.8px;width:.8px;height:13px;background:#e6e6e6'></div>
<div class='a' style='left:144.0px;top:24.8px;width:.8px;height:13px;background:#e6e6e6'></div>
<div class='a' style='left:266.1px;top:24.8px;width:.8px;height:13px;background:#e6e6e6'></div>
<div class='a' style='left:309.6px;top:24.8px;width:.8px;height:13px;background:#e6e6e6'></div>
<div class='a' style='left:492.20000000000005px;top:24.8px;width:1.6px;height:13px;background:#ececec'></div>
<div class='cb' style='left:74.60px;top:26.80px'></div>
<div class='cb' style='left:91.10px;top:26.80px'></div>
<div class='cb' style='left:74.60px;top:39.80px'></div>
<div class='cb dis' style='left:91.10px;top:39.80px'><svg class='a' style='left:0;top:0' width='7' height='7' viewBox='0 0 7 7'><path d='M0.8 3.3L2.8 5.6L6.4 0.9' fill='none' stroke='#c4c4c4' stroke-width='1.1'/></svg></div>
<div class='cb' style='left:74.60px;top:52.30px'><svg class='a' style='left:0;top:0' width='7' height='7' viewBox='0 0 7 7'><path d='M0.8 3.3L2.8 5.6L6.4 0.9' fill='none' stroke='#3a3a3a' stroke-width='1.1'/></svg></div>
<div class='cb' style='left:91.10px;top:52.30px'></div>
<div class='t' style='left:106.60px;top:27.10px;'>IF-ON</div>
<div class='t' style='left:147.90px;top:27.10px;'>Application</div>
<div class='t' style='left:270.20px;top:27.10px;'>PID</div>
<svg class='a' style='left:287.20000000000005px;top:29.3px' width='7' height='4' viewBox='0 0 7 4'><path d='M0.2 3.8L3.5 0.4L6.8 3.8Z' fill='#a8a8a8'/></svg>
<div class='t' style='left:314.20px;top:27.10px;'>Path</div>
<div class='t' style='left:146.90px;top:40.10px;'>TestSend_OneApp.exe</div>
<div class='t' style='left:269.90px;top:40.10px;'>1880</div>
<div class='t' style='left:313.60px;top:40.10px;'>C:\tmp\Bin\TestSend_OneApp.exe</div>
<div class='t' style='left:146.90px;top:52.10px;'>TestSend_OneApp.exe</div>
<div class='t' style='left:269.90px;top:52.10px;'>3184</div>
<div class='t' style='left:313.60px;top:52.10px;'>C:\tmp\Bin\TestSend_OneApp.exe</div>
<div class='a' style='left:147.60000000000002px;top:65.89999999999999px;width:198.6px;height:5px;background:#f4f7fb;border:1px solid #b9c2cf;border-radius:2px'></div>
<div class='a' style='left:156.60000000000002px;top:68.0px;width:181px;height:0;border-top:1px dotted #7da0d8'></div>
<svg class='a' style='left:151.60000000000002px;top:66.89999999999999px' width='4' height='3' viewBox='0 0 4 3'><path d='M0 3L2 0.2L4 3Z' fill='#2a7ae0'/></svg>
<svg class='a' style='left:339.6px;top:66.89999999999999px' width='4' height='3' viewBox='0 0 4 3'><path d='M0 3L2 0.2L4 3Z' fill='#2a7ae0'/></svg>
<div class='a' style='left:31.600000000000023px;top:72.5px;width:28.3px;height:12.6px;background:#f0f0f0;border:1px solid #d9d9d9;border-bottom:0'></div>
<div class='a' style='left:59.10000000000002px;top:72.5px;width:29.6px;height:12.6px;background:#f0f0f0;border:1px solid #d9d9d9;border-bottom:0'></div>
<div class='a' style='left:0.0px;top:84.3px;width:493.3px;height:159.2px;background:#fff;border:1px solid #dadada'></div>
<div class='a' style='left:0.4000000000000341px;top:70.3px;width:31.6px;height:15px;background:#fff;border:1px solid #d9d9d9;border-bottom:0'></div>
<div class='t' style='left:6.20px;top:73.10px;'>Grid</div>
<div class='t' style='left:35.60px;top:75.10px;'>Text</div>
<div class='t' style='left:64.60px;top:75.10px;'>Cfg</div>
<div class='cb' style='left:6.20px;top:90.70px'></div>
<div class='t' style='left:17.60px;top:91.10px;'>Expand Group</div>
<div class='a' style='left:2.6000000000000227px;top:101.49999999999999px;width:488.7px;height:25px;background:#a5a5a5'></div>
<div class='t' style='left:8.20px;top:110.10px;color:#dcdcdc'>Drag a column header here to group by that column</div>
<div class='a' style='left:3.10px;top:126.10px;width:489px;height:14px;background:#4d4d4d;'></div>
<div class='a' style='left:10.10px;top:140.10px;width:482px;height:38px;background:#bdbdbd;'></div>
<div class='a' style='left:3.10px;top:140.10px;width:8px;height:38px;background:#3a3a3a;'></div>
<div class='a' style='left:4.10px;top:127.10px;width:6px;height:12px;background:#f0f0f0;white-space:pre;overflow:hidden;line-height:13.6px;padding-left:1.3px;'></div>
<div class='a' style='left:11.10px;top:127.10px;width:44px;height:12px;background:#f0f0f0;white-space:pre;overflow:hidden;line-height:13.6px;padding-left:1.3px;'>ID</div>
<div class='a' style='left:56.10px;top:127.10px;width:44px;height:12px;background:#f0f0f0;white-space:pre;overflow:hidden;line-height:13.6px;padding-left:1.3px;'>TypeSend</div>
<div class='a' style='left:101.10px;top:127.10px;width:44px;height:12px;background:#f0f0f0;white-space:pre;overflow:hidden;line-height:13.6px;padding-left:1.3px;'>TypeMsg</div>
<div class='a' style='left:146.10px;top:127.10px;width:140px;height:12px;background:#f0f0f0;white-space:pre;overflow:hidden;line-height:13.6px;padding-left:1.3px;'>Text</div>
<div class='a' style='left:287.10px;top:127.10px;width:64px;height:12px;background:#f0f0f0;white-space:pre;overflow:hidden;line-height:13.6px;padding-left:1.3px;'>Level</div>
<div class='a' style='left:352.10px;top:127.10px;width:65px;height:12px;background:#f0f0f0;white-space:pre;overflow:hidden;line-height:13.6px;padding-left:1.3px;'>Step</div>
<div class='a' style='left:418.10px;top:127.10px;width:40px;height:12px;background:#f0f0f0;white-space:pre;overflow:hidden;line-height:13.6px;padding-left:1.3px;'>TIC</div>
<div class='a' style='left:459.10px;top:127.10px;width:32px;height:12px;background:#f0f0f0;white-space:pre;overflow:hidden;line-height:13.6px;padding-left:1.3px;'>DataTime</div>
<div class='a' style='left:4.10px;top:140.10px;width:6px;height:11px;background:#f0f0f0;'></div>
<svg class='a' style='left:5.10px;top:142.10px' width='4' height='7' viewBox='0 0 4 7'><path d='M0 0L4 3.5L0 7Z' fill='#000'/></svg>
<div class='a' style='left:11.10px;top:140.10px;width:44px;height:11px;background:#f0f0f0;white-space:pre;overflow:hidden;line-height:12.8px;text-align:right;padding-right:1.3px;'>1</div>
<div class='a' style='left:56.10px;top:140.10px;width:44px;height:11px;background:#fff;white-space:pre;overflow:hidden;line-height:12.8px;padding-left:12.4px;'>Norm</div>
<div class='a' style='left:67.10px;top:141.10px;width:20px;height:9px;background:#e4e4e4;'></div>
<div class='t' style='left:68.50px;top:141.10px;'>Norm</div>
<svg class='a' style='left:60.40px;top:140.70px' width='7.8' height='10.4' viewBox='0 0 9 11'><path d='M0.8 2.4H3.6V0.8L8.4 5.5L3.6 10.2V8.6H0.8Z' fill='#22dd22' stroke='#14a014' stroke-width='.6'/></svg>
<div class='a' style='left:101.10px;top:140.10px;width:44px;height:11px;background:#fff;white-space:pre;overflow:hidden;line-height:12.8px;padding-left:13px;'>Confirm</div>
<div class='a' style='left:112.60px;top:141.10px;width:29.5px;height:9px;background:#e4e4e4;'></div>
<div class='t' style='left:114.10px;top:141.10px;'>Confirm</div>
<svg class='a' style='left:102.30px;top:140.30px' width='11' height='11' viewBox='0 0 12 12'><circle cx='6.5' cy='6.5' r='5.2' fill='#b4b4b4'/><circle cx='5.8' cy='5.8' r='5.2' fill='#2c5ed4' stroke='#dfe6f6' stroke-width='.7'/><ellipse cx='5.6' cy='3.4' rx='3.6' ry='2.2' fill='#7fa4f0' opacity='.75'/><path d='M4 4.5A1.9 1.9 0 1 1 6.2 6.1V7.1' fill='none' stroke='#fff' stroke-width='1.4'/><circle cx='6.1' cy='9' r='.85' fill='#fff'/></svg>
<div class='a' style='left:146.10px;top:140.10px;width:140px;height:11px;background:#f0f0f0;white-space:pre;overflow:hidden;line-height:12.8px;padding-left:1.4px;'>Text Message</div>
<div class='a' style='left:287.10px;top:140.10px;width:64px;height:11px;background:#f0f0f0;white-space:pre;overflow:hidden;line-height:12.8px;text-align:right;padding-right:1.3px;'>2</div>
<div class='a' style='left:352.10px;top:140.10px;width:65px;height:11px;background:#f0f0f0;white-space:pre;overflow:hidden;line-height:12.8px;text-align:right;padding-right:1.3px;'>3</div>
<div class='a' style='left:418.10px;top:140.10px;width:40px;height:11px;background:#f0f0f0;white-space:pre;overflow:hidden;line-height:12.8px;text-align:right;padding-right:1.3px;'>6433828</div>
<div class='a' style='left:459.10px;top:140.10px;width:32px;height:11px;background:#f0f0f0;white-space:pre;overflow:hidden;line-height:12.8px;padding-left:1.4px;'>09.02.19 20:</div>
<div class='a' style='left:4.10px;top:152.10px;width:6px;height:12px;background:#f0f0f0;'></div>
<div class='a' style='left:11.10px;top:152.10px;width:44px;height:12px;background:#fff;white-space:pre;overflow:hidden;line-height:13.8px;text-align:right;padding-right:1.3px;'>2</div>
<div class='a' style='left:56.10px;top:152.10px;width:44px;height:12px;background:#fff;white-space:pre;overflow:hidden;line-height:13.8px;padding-left:12.4px;'>Norm</div>
<svg class='a' style='left:60.40px;top:153.20px' width='7.8' height='10.4' viewBox='0 0 9 11'><path d='M0.8 2.4H3.6V0.8L8.4 5.5L3.6 10.2V8.6H0.8Z' fill='#22dd22' stroke='#14a014' stroke-width='.6'/></svg>
<div class='a' style='left:101.10px;top:152.10px;width:44px;height:12px;background:#fff;white-space:pre;overflow:hidden;line-height:13.8px;padding-left:13px;'>True</div>
<svg class='a' style='left:102.30px;top:152.80px' width='11' height='11' viewBox='0 0 12 12'><rect x='.8' y='.8' width='10.4' height='10.4' fill='#fff' stroke='#5a8fe0' stroke-width='1'/><path d='M2.6 6.2L5 9L9.8 2.8' fill='none' stroke='#1ea81e' stroke-width='2'/></svg>
<div class='a' style='left:146.10px;top:152.10px;width:140px;height:12px;background:#fff;white-space:pre;overflow:hidden;line-height:13.8px;padding-left:1.4px;'>Text Message</div>
<div class='a' style='left:287.10px;top:152.10px;width:64px;height:12px;background:#fff;white-space:pre;overflow:hidden;line-height:13.8px;text-align:right;padding-right:1.3px;'>2</div>
<div class='a' style='left:352.10px;top:152.10px;width:65px;height:12px;background:#fff;white-space:pre;overflow:hidden;line-height:13.8px;text-align:right;padding-right:1.3px;'>3</div>
<div class='a' style='left:418.10px;top:152.10px;width:40px;height:12px;background:#fff;white-space:pre;overflow:hidden;line-height:13.8px;text-align:right;padding-right:1.3px;'>6437890</div>
<div class='a' style='left:459.10px;top:152.10px;width:32px;height:12px;background:#fff;white-space:pre;overflow:hidden;line-height:13.8px;padding-left:1.4px;'>09.02.19 20:</div>
<div class='a' style='left:4.10px;top:165.10px;width:6px;height:12px;background:#f0f0f0;'></div>
<div class='a' style='left:11.10px;top:165.10px;width:44px;height:12px;background:#fff;white-space:pre;overflow:hidden;line-height:13.8px;text-align:right;padding-right:1.3px;'>3</div>
<div class='a' style='left:56.10px;top:165.10px;width:44px;height:12px;background:#fff;white-space:pre;overflow:hidden;line-height:13.8px;padding-left:12.4px;'>Norm</div>
<svg class='a' style='left:60.40px;top:166.20px' width='7.8' height='10.4' viewBox='0 0 9 11'><path d='M0.8 2.4H3.6V0.8L8.4 5.5L3.6 10.2V8.6H0.8Z' fill='#22dd22' stroke='#14a014' stroke-width='.6'/></svg>
<div class='a' style='left:101.10px;top:165.10px;width:44px;height:12px;background:#fff;white-space:pre;overflow:hidden;line-height:13.8px;padding-left:13px;'>Error</div>
<svg class='a' style='left:102.30px;top:165.80px' width='11' height='11' viewBox='0 0 12 12'><circle cx='6' cy='6' r='5.6' fill='#e01818'/><circle cx='6' cy='6' r='5.6' fill='none' stroke='#a80c0c' stroke-width='.5'/><path d='M3.8 3.8L8.2 8.2M8.2 3.8L3.8 8.2' stroke='#fff' stroke-width='1.7'/></svg>
<div class='a' style='left:146.10px;top:165.10px;width:140px;height:12px;background:#fff;white-space:pre;overflow:hidden;line-height:13.8px;padding-left:1.4px;'>Text Message</div>
<div class='a' style='left:287.10px;top:165.10px;width:64px;height:12px;background:#fff;white-space:pre;overflow:hidden;line-height:13.8px;text-align:right;padding-right:1.3px;'>2</div>
<div class='a' style='left:352.10px;top:165.10px;width:65px;height:12px;background:#fff;white-space:pre;overflow:hidden;line-height:13.8px;text-align:right;padding-right:1.3px;'>3</div>
<div class='a' style='left:418.10px;top:165.10px;width:40px;height:12px;background:#fff;white-space:pre;overflow:hidden;line-height:13.8px;text-align:right;padding-right:1.3px;'>6440484</div>
<div class='a' style='left:459.10px;top:165.10px;width:32px;height:12px;background:#fff;white-space:pre;overflow:hidden;line-height:13.8px;padding-left:1.4px;'>09.02.19 20:</div>
<div class='a' style='left:491.30000000000007px;top:87.8px;width:1px;height:154.5px;background:#a4a4a4'></div>
<div class='nb' style='left:3.90px;top:230.20px'><svg class='a' style='left:0;top:0' width='10' height='10.5' viewBox='0 0 10 10.5'><path d='M2.3 3V7.6M8 3L5.4 5.3L8 7.6ZM5.2 3L2.7 5.3L5.2 7.6Z' stroke='#b9b9b9' stroke-width='.5' fill='#b9b9b9'/></svg></div>
<div class='nb' style='left:15.80px;top:230.20px'><svg class='a' style='left:0;top:0' width='10' height='10.5' viewBox='0 0 10 10.5'><path d='M8 3L5.3 5.3L8 7.6ZM5 3L2.3 5.3L5 7.6Z' stroke='#b9b9b9' stroke-width='.5' fill='#b9b9b9'/></svg></div>
<div class='nb' style='left:27.70px;top:230.20px'><svg class='a' style='left:0;top:0' width='10' height='10.5' viewBox='0 0 10 10.5'><path d='M6.2 3L3.5 5.3L6.2 7.6Z' stroke='#b9b9b9' stroke-width='.5' fill='#b9b9b9'/></svg></div>
<div class='nb' style='left:39.60px;top:230.20px'><svg class='a' style='left:0;top:0' width='10' height='10.5' viewBox='0 0 10 10.5'><path d='M3.9 3L6.6 5.3L3.9 7.6Z' stroke='#111' stroke-width='.5' fill='#111'/></svg></div>
<div class='nb' style='left:51.50px;top:230.20px'><svg class='a' style='left:0;top:0' width='10' height='10.5' viewBox='0 0 10 10.5'><path d='M2.2 3L4.9 5.3L2.2 7.6ZM5 3L7.7 5.3L5 7.6Z' stroke='#111' stroke-width='.5' fill='#111'/></svg></div>
<div class='nb' style='left:63.40px;top:230.20px'><svg class='a' style='left:0;top:0' width='10' height='10.5' viewBox='0 0 10 10.5'><path d='M2 3L4.5 5.3L2 7.6ZM4.7 3L7.2 5.3L4.7 7.6ZM7.8 3V7.6' stroke='#111' stroke-width='.5' fill='#111'/></svg></div>
<div class='nb' style='left:75.30px;top:230.20px'><svg class='a' style='left:0;top:0' width='10' height='10.5' viewBox='0 0 10 10.5'><path d='M2.2 6.6A2.7 2.7 0 0 1 7 4.8M5.6 4.2L8.2 4.4L7.2 6.8Z' stroke='#222' stroke-width='.9' fill='none'/></svg></div>
<div class='nb' style='left:87.20px;top:230.20px'><svg class='a' style='left:0;top:0' width='10' height='10.5' viewBox='0 0 10 10.5'><path d='M5 2.4V8.2M2.2 5.3H7.8M3 3.3L7 7.3M7 3.3L3 7.3' stroke='#111' stroke-width='.8' fill='none'/></svg></div>
<div class='nb' style='left:99.10px;top:230.20px'><svg class='a' style='left:0;top:0' width='10' height='10.5' viewBox='0 0 10 10.5'><path d='M5.4 3V8.2M2.8 5.6H8M3.4 3.6L7.4 7.6M7.4 3.6L3.4 7.6M1.6 2.4L2.8 3.4' stroke='#999' stroke-width='.8' fill='none'/></svg></div>
<div class='nb' style='left:111.00px;top:230.20px'><svg class='a' style='left:0;top:0' width='10' height='10.5' viewBox='0 0 10 10.5'><path d='M2.4 2.8H7.6V3.8L5.8 5.4V8H4.2V5.4L2.4 3.8Z' stroke='#ff8400' stroke-width='.5' fill='#ff8400'/></svg></div>
<div class='a' style='left:122.10000000000002px;top:229.30000000000007px;width:370px;height:13px;background:#f2f2f2'></div>
<div class='a' style='left:168.10000000000002px;top:229.30000000000007px;width:248px;height:13px;background:#efefef;border:1px solid #555'></div>
<div class='a' style='left:157.10000000000002px;top:229.30000000000007px;width:12px;height:13px;background:#f4f4f4;border:1px solid #444'><svg class='a' style='left:-1px;top:-1px' width='12' height='13' viewBox='0 0 12 13'><path d='M7 3L3.4 6.5L7 10Z' fill='#000'/></svg></div>
<div class='a' style='left:480.1px;top:229.30000000000007px;width:12px;height:13px;background:#f4f4f4;border:1px solid #444'><svg class='a' style='left:-1px;top:-1px' width='12' height='13' viewBox='0 0 12 13'><path d='M4.4 3L8 6.5L4.4 10Z' fill='#000'/></svg></div>
</div>
</div>
</body></html>
